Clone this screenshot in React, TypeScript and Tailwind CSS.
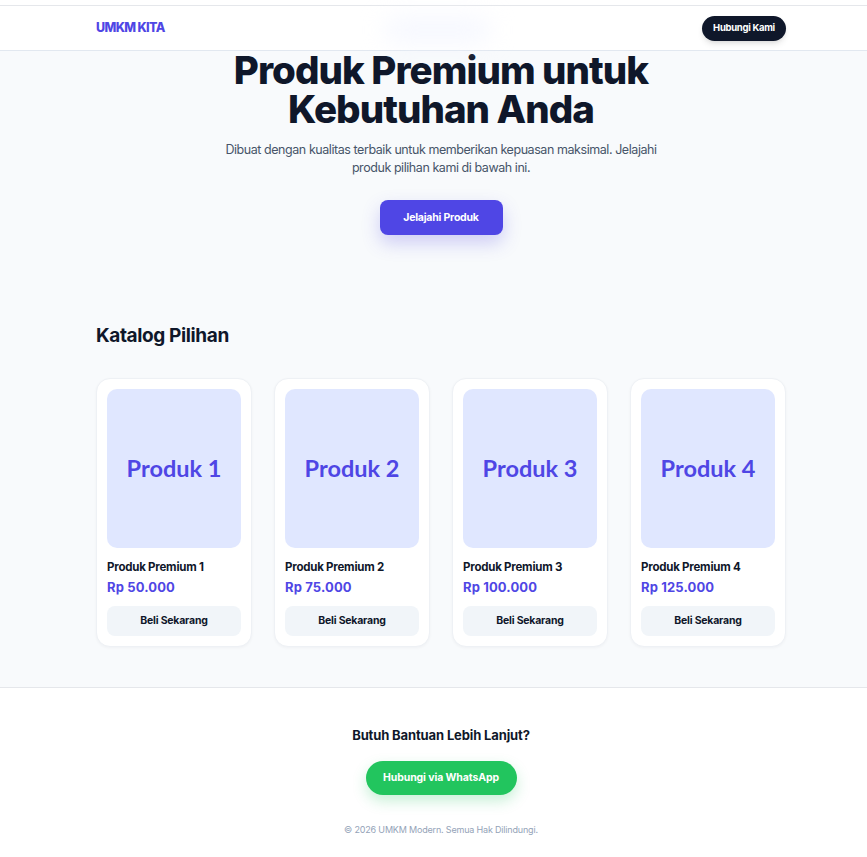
import React from "react";

const products = [
  { n: 1, price: "Rp 50.000" },
  { n: 2, price: "Rp 75.000" },
  { n: 3, price: "Rp 100.000" },
  { n: 4, price: "Rp 125.000" },
];

export default function App() {
  return (
    <div className="min-h-[857px] bg-white text-[#0f172a] font-['Inter','Liberation_Sans',sans-serif]">
      <div className="h-[6px] bg-white border-b border-gray-200" />
      <header className="relative h-[45px] bg-white/95 border-b border-[#e2e8f0]">
        <div className="absolute left-[385px] top-[12px] w-[105px] h-[24px] rounded-full bg-indigo-50/60 blur-md" />
        <div className="relative h-full pl-[96px] pr-[81px] flex items-center justify-between">
          <span className="text-[12.5px] font-extrabold tracking-[-0.05em] text-[#4f46e5]">UMKM KITA</span>
          <button className="h-[25px] w-[84px] rounded-full bg-[#0f172a] text-white text-[9.5px] font-bold tracking-[-0.03em] shadow-md">
            Hubungi Kami
          </button>
        </div>
      </header>
      <main className="bg-[#f8fafc] pl-[96px] pr-[81px] pb-[40px] border-b border-gray-200">
        <section className="flex flex-col items-center text-center">
          <h1 className="text-[38.5px] leading-[39px] font-extrabold tracking-[-0.025em] text-[#0f172a]">
            Produk Premium untuk
            <br />
            Kebutuhan Anda
          </h1>
          <p className="mt-[12px] w-[440px] text-[12.5px] leading-[18px] text-[#475569] tracking-[-0.035em]">
            Dibuat dengan kualitas terbaik untuk memberikan kepuasan maksimal. Jelajahi produk pilihan kami di bawah ini.
          </p>
          <button className="mt-[23px] h-[35px] w-[123px] rounded-lg bg-[#4f46e5] text-white text-[10.5px] font-bold tracking-[-0.02em] shadow-[0_8px_18px_rgba(79,70,229,0.25)]">
            Jelajahi Produk
          </button>
        </section>
        <h2 className="mt-[88px] text-[19px] leading-[26px] font-bold tracking-[-0.02em] text-[#0f172a]">
          Katalog Pilihan
        </h2>
        <div className="mt-[29px] grid grid-cols-4 gap-[22px]">
          {products.map((p) => (
            <div
              key={p.n}
              className="rounded-[14px] bg-white border border-[#eef1f5] shadow-[0_1px_3px_rgba(15,23,42,0.04)] p-[10px] flex flex-col"
            >
              <div className="h-[159px] rounded-[10px] bg-[#e0e7ff] flex items-center justify-center">
                <span className="font-['Lato','Liberation_Sans',sans-serif] text-[23.5px] font-bold text-[#4f46e5]">
                  Produk {p.n}
                </span>
              </div>
              <div className="mt-[11px] text-[11.5px] leading-[16px] font-bold tracking-[-0.02em] text-[#0f172a]">
                Produk Premium {p.n}
              </div>
              <div className="mt-[3px] text-[13px] leading-[18px] font-bold tracking-[0.01em] text-[#4f46e5]">
                {p.price}
              </div>
              <button className="mt-[10px] h-[30px] rounded-lg bg-[#f1f5f9] text-[10.5px] font-bold tracking-[-0.02em] text-[#0f172a]">
                Beli Sekarang
              </button>
            </div>
          ))}
        </div>
      </main>
      <footer className="bg-white pl-[96px] pr-[81px] pt-[37px] flex flex-col items-center">
        <h3 className="text-[13px] leading-[20px] font-bold tracking-[-0.01em] text-[#0f172a]">
          Butuh Bantuan Lebih Lanjut?
        </h3>
        <button className="mt-[16px] h-[34px] w-[151px] rounded-full bg-[#22c55e] text-white text-[10.5px] font-bold tracking-[-0.01em] shadow-[0_6px_14px_rgba(34,197,94,0.25)]">
          Hubungi via WhatsApp
        </button>
        <p className="mt-[27px] text-[9px] leading-[15px] text-[#94a3b8] tracking-[-0.02em]">
          © 2026 UMKM Modern. Semua Hak Dilindungi.
        </p>
      </footer>
    </div>
  );
}
